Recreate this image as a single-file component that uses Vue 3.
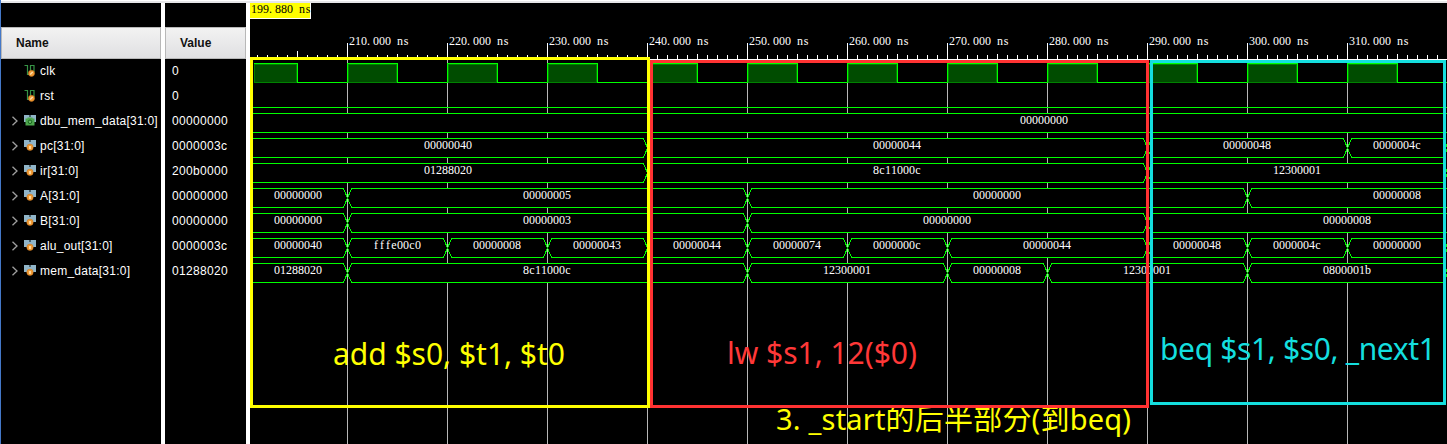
<script setup>
const signals = [
  { name: 'clk', value: '0', kind: 'bit' },
  { name: 'rst', value: '0', kind: 'bit' },
  { name: 'dbu_mem_data[31:0]', value: '00000000', kind: 'mem' },
  { name: 'pc[31:0]', value: '0000003c', kind: 'bus' },
  { name: 'ir[31:0]', value: '200b0000', kind: 'bus' },
  { name: 'A[31:0]', value: '00000000', kind: 'bus' },
  { name: 'B[31:0]', value: '00000000', kind: 'bus' },
  { name: 'alu_out[31:0]', value: '0000003c', kind: 'bus' },
  { name: 'mem_data[31:0]', value: '01288020', kind: 'bus' },
]

const START = 240
const END = 1547

// Each bus: row index and [end x, value, label centre]
const buses = [
  { row: 2, segs: [[END, '00000000', 1044]] },
  { row: 3, segs: [[647, '00000040', 448], [1147, '00000044', 897], [1347, '00000048', 1247], [1447, '0000004c', 1397]] },
  { row: 4, segs: [[647, '01288020', 448], [1147, '8c11000c', 897], [1447, '12300001', 1297]] },
  { row: 5, segs: [[347, '00000000', 298], [747, '00000005', 547], [1247, '00000000', 997], [END, '00000008', 1397]] },
  { row: 6, segs: [[347, '00000000', 298], [747, '00000003', 547], [1147, '00000000', 947], [END, '00000008', 1347]] },
  { row: 7, segs: [[347, '00000040', 298], [447, 'fffe00c0', 397], [547, '00000008', 497], [647, '00000043', 597], [747, '00000044', 697], [847, '00000074', 797], [947, '0000000c', 897], [1147, '00000044', 1047], [1247, '00000048', 1197], [1347, '0000004c', 1297], [1447, '00000000', 1397]] },
  { row: 8, segs: [[347, '01288020', 298], [747, '8c11000c', 547], [947, '12300001', 847], [1047, '00000008', 997], [1247, '12300001', 1147], [1447, '0800001b', 1347]] },
]

const segments = buses.flatMap(({ row, segs }) => {
  const top = 63.5 + row * 25
  const bottom = top + 19
  const mid = top + 9.5
  let from = START
  return segs.map(([to, value, centre]) => {
    const a = from + 0.5
    const b = to + 0.5
    from = to
    return {
      path: `M${a} ${mid}L${a + 4} ${top}H${b - 4}L${b} ${mid}L${b - 4} ${bottom}H${a + 4}Z`,
      value,
      x: centre - 24,
      y: top + 10.5,
    }
  })
})

// Fixed-pitch glyph positions, 6px apart; narrow letters are centred in their cell
const nudge = { f: 0.9, s: 0.7, e: 0.3, c: 0.3 }
const cells = (text, x) => Array.from(text, (ch, i) => x + i * 6 + (nudge[ch] || 0)).join(' ')

const majors = Array.from({ length: 11 }, (_, i) => ({ x: 347 + i * 100, label: `${210 + i * 10}.000 ns` }))
const ticks = Array.from({ length: 119 }, (_, i) => {
  const x = 257 + i * 10
  const top = x === 297 ? 51 : x % 100 === 97 ? 54 : 55
  return { x, top }
})
const pulses = Array.from({ length: 11 }, (_, i) => 347 + i * 100)
const clkPath = 'M254 63.5H297.5V82.5H' + pulses.map((x) => `${x + 0.5}V63.5H${x + 50.5}V82.5`).join('H') + 'H1447'
</script>

<template>
  <div class="viewer">
    <div class="topline"></div>
    <div class="panes">
      <div class="pane names">
        <div class="head">Name</div>
        <div v-for="s in signals" :key="s.name" class="row">
          <svg class="arrow" viewBox="0 0 8 12"><path v-if="s.kind !== 'bit'" d="M1.5 1.8L6 6L1.5 10.2" /></svg>
          <svg class="icon" viewBox="0 0 12 13">
            <g v-if="s.kind === 'bit'">
              <path class="wire" d="M0.5 1.5H3.5V10.5H6M6.5 9V1.5H10V8" />
              <circle class="orb" cx="7.5" cy="9.3" r="3.1" />
              <path class="glint" d="M6.2 10.5L8.7 8" />
            </g>
            <g v-else>
              <path class="tabs" d="M0 1H5V3H7V1H12V8H9V9H3V8H0Z" />
              <path class="notch" d="M5 1H7V3H5Z" />
              <template v-if="s.kind === 'bus'">
                <circle class="orb" cx="6" cy="8.3" r="3.2" />
                <rect class="shine" x="5" y="7" width="2" height="3" />
              </template>
              <template v-else>
                <path class="chip" d="M1.5 4.5H3.5V3.5H8.5V4.5H10.5V11.5H1.5Z" />
                <circle class="lens" cx="6" cy="7.8" r="1.8" />
              </template>
            </g>
          </svg>
          <span>{{ s.name }}</span>
        </div>
      </div>
      <div class="pane values">
        <div class="head">Value</div>
        <div v-for="s in signals" :key="s.name" class="row">{{ s.value }}</div>
      </div>
      <svg class="wave" width="1197" height="441" viewBox="250 3 1197 441">
        <g shape-rendering="crispEdges">
          <rect class="black" x="250" y="3" width="1197" height="441" />
          <rect v-for="m in majors" :key="m.x" class="grid" :x="m.x" y="60" width="1" height="384" />
          <rect v-for="t in ticks" :key="t.x" class="white" :x="t.x" :y="t.top" width="1" :height="59 - t.top" />
          <rect v-for="m in majors" :key="m.label" class="white" :x="m.x" y="43" width="1" height="16" />
          <rect class="white" x="250" y="59" width="1197" height="1" />
          <rect class="pulse" x="254.5" y="64.5" width="42" height="18" />
          <rect v-for="x in pulses" :key="x" class="pulse" :x="x + 1.5" y="64.5" width="48" height="18" />
          <path class="trace" :d="clkPath" />
          <path class="trace" d="M250 107.5H1447" />
          <path v-for="(s, i) in segments" :key="i" class="bus" :d="s.path" />
          <rect class="white" x="250" y="3" width="61" height="16" />
          <rect class="yellow" x="250" y="3" width="60" height="15" />
        </g>
        <g class="mono">
          <text v-for="m in majors" :key="m.x" :x="cells(m.label, m.x + 2)" y="45">{{ m.label }}</text>
          <text v-for="(s, i) in segments" :key="i" :x="cells(s.value, s.x)" :y="s.y">{{ s.value }}</text>
          <text class="cursor" :x="cells('199.880 ns', 251)" y="13">199.880 ns</text>
        </g>
        <clipPath id="below"><rect x="650" y="408" width="500" height="36" /></clipPath>
        <g class="note">
          <text class="y" x="333" y="365" textLength="232">add $s0, $t1, $t0</text>
          <text class="r" x="727" y="364" textLength="190">lw $s1, 12($0)</text>
          <text class="c" x="1160" y="360" textLength="276">beq $s1, $s0, _next1</text>
          <text class="y cjk" x="776" y="430" textLength="355" clip-path="url(#below)">3. _start的后半部分(到beq)</text>
        </g>
        <g class="frames" shape-rendering="crispEdges">
          <rect class="fy" x="251.5" y="58.5" width="397" height="348" />
          <rect class="fr" x="651.5" y="61.5" width="496" height="345" />
          <rect class="fc" x="1151.5" y="61.5" width="293" height="342" />
        </g>
      </svg>
    </div>
  </div>
</template>

<style>
body { margin: 0; background: #fff; overflow: hidden; }
</style>

<style scoped>
.viewer { width: 1447px; height: 444px; background: #fff; box-sizing: border-box; border-left: 1px solid #4478c8; overflow: hidden; font: 12px "Liberation Sans", Arial, sans-serif; }
.topline { height: 2px; border-top: 1px solid #fff; background: #e6e6e8; }
.panes { display: flex; height: 441px; }
.pane { box-sizing: border-box; padding-top: 24px; background: #000; color: #fff; flex: none; }
.names { width: 160px; margin-right: 4px; }
.values { width: 81px; margin-right: 4px; }
.head { box-sizing: border-box; height: 32px; border: 1px solid #b8b8b8; background: linear-gradient(#f2f2f2, #e0e0e2); color: #111; font-weight: bold; line-height: 30px; padding-left: 14px; }
.row { box-sizing: border-box; height: 25px; padding-bottom: 2px; display: flex; align-items: center; white-space: nowrap; letter-spacing: 0.25px; }
.names .row { padding-left: 10px; }
.values .row { padding-left: 7px; letter-spacing: 0.33px; }
.arrow { width: 8px; height: 12px; margin: 1px 5px 0 0; fill: none; stroke: #a0a0a0; stroke-width: 1.3; }
.icon { width: 12px; height: 13px; margin-right: 4px; }
.wire { fill: none; stroke: #369345; stroke-width: 1.2; }
.orb { fill: #f09a35; stroke: #c8721a; stroke-width: 0.5; }
.glint { stroke: #ffe3b0; stroke-width: 1.2; }
.tabs { fill: #91b5c9; }
.notch { fill: #47606d; }
.shine { fill: #ffd79a; }
.chip { fill: #4ca64c; }
.lens { fill: #65b765; stroke: #19641e; stroke-width: 1; }
.wave { display: block; flex: none; }
.black { fill: #000; }
.white { fill: #fff; }
.yellow { fill: #ff0; }
.grid { fill: #b8b8b8; }
.pulse { fill: #004c00; stroke: #008200; stroke-width: 1; }
.trace { fill: none; stroke: #0f0; stroke-width: 1; }
.bus { fill: #000; stroke: #0f0; stroke-width: 1; }
.mono { font: 12px "Liberation Serif", serif; fill: #fff; white-space: pre; }
.mono .cursor { fill: #000; }
.note { font: 30px "Noto Sans", "Noto Sans CJK SC", sans-serif; }
.note .cjk { font-size: 29px; }
.y { fill: #ff0; }
.r { fill: #ff3838; }
.c { fill: #14dede; }
.frames rect { fill: none; stroke-width: 3; }
.frames .fy { stroke: #ff0; }
.frames .fr { stroke: #ff3232; }
.frames .fc { stroke: #14dede; }
</style>
